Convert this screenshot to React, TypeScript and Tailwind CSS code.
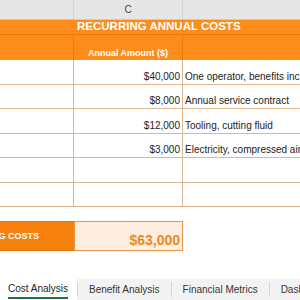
const rows = [
  { amount: '$40,000', note: 'One operator, benefits included', h: 'h-[25px]' },
  { amount: '$8,000', note: 'Annual service contract', h: 'h-[24px]' },
  { amount: '$12,000', note: 'Tooling, cutting fluid', h: 'h-[25px]' },
  { amount: '$3,000', note: 'Electricity, compressed air', h: 'h-[24px]' },
  { amount: '', note: '', h: 'h-[25px]' },
  { amount: '', note: '', h: 'h-[24px]' },
];

const tabs = ['Cost Analysis', 'Benefit Analysis', 'Financial Metrics', 'Dashboard'];

export default function App() {
  return (
    <div className="w-[300px] h-[300px] overflow-hidden bg-white flex flex-col font-['Liberation_Sans',Arial,sans-serif] text-[#222]">
      {/* column letters */}
      <div className="h-[20px] flex shrink-0 bg-[#e6e6e6] border-b border-[#c9c9c9]">
        <div className="w-[74px] shrink-0 border-r border-[#d4d4d4]" />
        <div className="w-[109px] shrink-0 border-r border-[#d4d4d4] flex items-center justify-center text-[10px] text-[#3b4a3f]">C</div>
        <div className="flex-1" />
      </div>

      {/* title */}
      <div className="h-[15px] shrink-0 bg-[#fd8c1a] border-b border-[#e87b0c] flex items-center pl-[77px] whitespace-nowrap">
        <span className="text-[11.5px] font-bold text-white leading-none">RECURRING ANNUAL COSTS</span>
      </div>

      {/* sub header */}
      <div className="h-[25px] shrink-0 flex bg-[#fd8c1a]">
        <div className="w-[74px] shrink-0 border-r border-[#e87b0c]" />
        <div className="w-[109px] shrink-0 border-r border-[#e87b0c] flex items-end justify-center pb-[2px]">
          <span className="text-[9px] font-bold text-white leading-none whitespace-nowrap">Annual Amount ($)</span>
        </div>
        <div className="flex-1" />
      </div>

      {/* data rows */}
      {rows.map((r, i) => (
        <div key={i} className={`${r.h} shrink-0 flex border-b border-[#dfb791]`}>
          <div className="w-[74px] shrink-0 border-r border-[#dfb791]" />
          <div className="w-[109px] shrink-0 border-r border-[#dfb791] flex items-end justify-end pr-[2px] pb-[2px] text-[10px] leading-none">
            {r.amount}
          </div>
          <div className="flex-1 flex items-end pl-[2px] pb-[2px] text-[10px] leading-none whitespace-nowrap overflow-hidden">
            {r.note}
          </div>
        </div>
      ))}

      <div className="h-[14px] shrink-0" />

      {/* totals */}
      <div className="h-[30px] shrink-0 flex">
        <div className="w-[74px] shrink-0 bg-[#f7810f] border-y border-[#e4760a] flex items-center justify-end pr-[35px] overflow-hidden whitespace-nowrap">
          <span className="text-[9px] font-bold text-white leading-none">TOTAL RECURRING COSTS</span>
        </div>
        <div className="w-[109px] shrink-0 bg-[#fdeee0] border border-[#e8944a] flex items-end justify-end pr-[2px] pb-[3px]">
          <span className="text-[14px] font-bold text-[#ec8a22] leading-none">$63,000</span>
        </div>
        <div className="flex-1" />
      </div>

      <div className="flex-1" />

      {/* sheet tabs */}
      <div className="h-[21px] shrink-0 flex items-stretch bg-[#f3f3f3] text-[10px] whitespace-nowrap">
        {tabs.map((t, i) => (
          <div
            key={t}
            className={
              i === 0
                ? 'w-[77px] shrink-0 bg-white flex items-center pl-[8px] font-medium text-[#222]'
                : 'shrink-0 flex items-center px-[11px] text-[#333] border-l border-[#d6d6d6] my-[3px]'
            }
          >
            {i === 0 ? (
              <span className="border-b-2 border-[#1e7145] pb-[1px]">{t}</span>
            ) : (
              t
            )}
          </div>
        ))}
      </div>
    </div>
  );
}
